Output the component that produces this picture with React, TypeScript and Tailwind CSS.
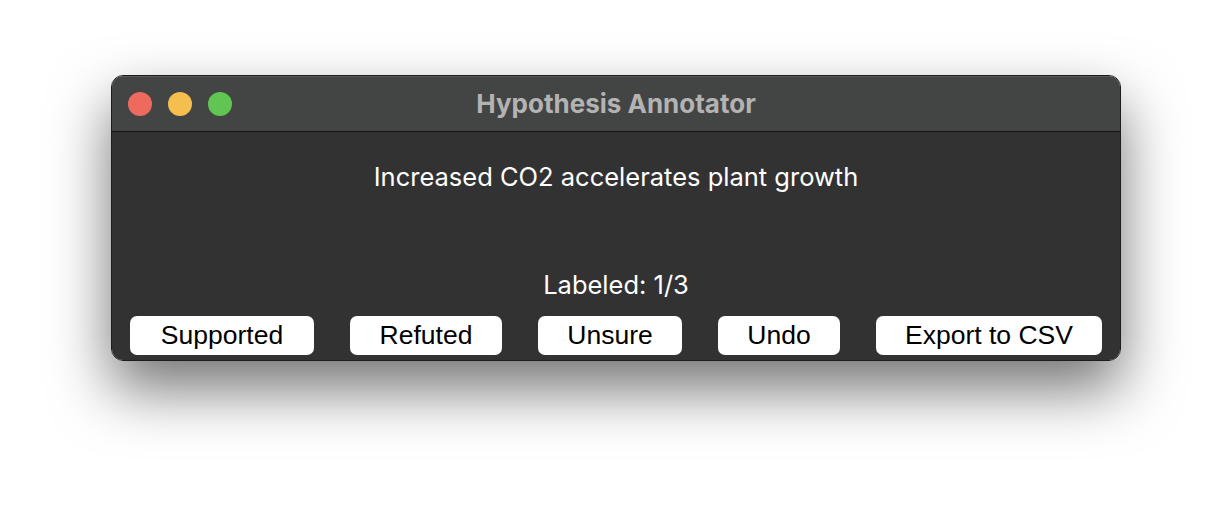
export default function App() {
  const buttons = [
    { label: "Supported", w: "w-[184px]" },
    { label: "Refuted", w: "w-[152px]" },
    { label: "Unsure", w: "w-[144px]" },
    { label: "Undo", w: "w-[122px]" },
    { label: "Export to CSV", w: "w-[226px]" },
  ];

  return (
    <div className="flex h-[508px] w-[1232px] justify-center bg-white pt-[75px]">
      {/* Window */}
      <div className="flex h-[286px] w-[1010px] flex-col overflow-hidden rounded-[12px] border border-[#1c1c1c] shadow-[0_28px_60px_rgba(0,0,0,0.55)]">
        {/* Title bar */}
        <div className="relative flex h-[56px] items-center justify-center border-b border-[#141414] bg-[#434544] shadow-[inset_0_1px_0_rgba(255,255,255,0.12)]">
          <div className="absolute left-[16px] top-[16px] flex gap-[16px]">
            <span className="h-[24px] w-[24px] rounded-full bg-[#ee6a5f]" />
            <span className="h-[24px] w-[24px] rounded-full bg-[#f5bf4f]" />
            <span className="h-[24px] w-[24px] rounded-full bg-[#61c554]" />
          </div>
          <span className="font-['Inter',sans-serif] text-[26px] font-bold text-[#b3b3b3]">
            Hypothesis Annotator
          </span>
        </div>

        {/* Content */}
        <div className="flex flex-1 flex-col items-center bg-[#323232] font-['Inter',sans-serif] text-white">
          <p className="mt-[30px] text-[25.5px] leading-[30px]">
            Increased CO2 accelerates plant growth
          </p>
          <p className="mt-[78px] text-[25.5px] leading-[30px]">Labeled: 1/3</p>
          <div className="mt-[16px] flex gap-[36px]">
            {buttons.map((b) => (
              <button
                key={b.label}
                className={`h-[39px] ${b.w} whitespace-nowrap rounded-[7px] bg-white font-['Liberation_Sans',sans-serif] text-[26.5px] leading-[39px] text-black`}
              >
                {b.label}
              </button>
            ))}
          </div>
        </div>
      </div>
    </div>
  );
}
